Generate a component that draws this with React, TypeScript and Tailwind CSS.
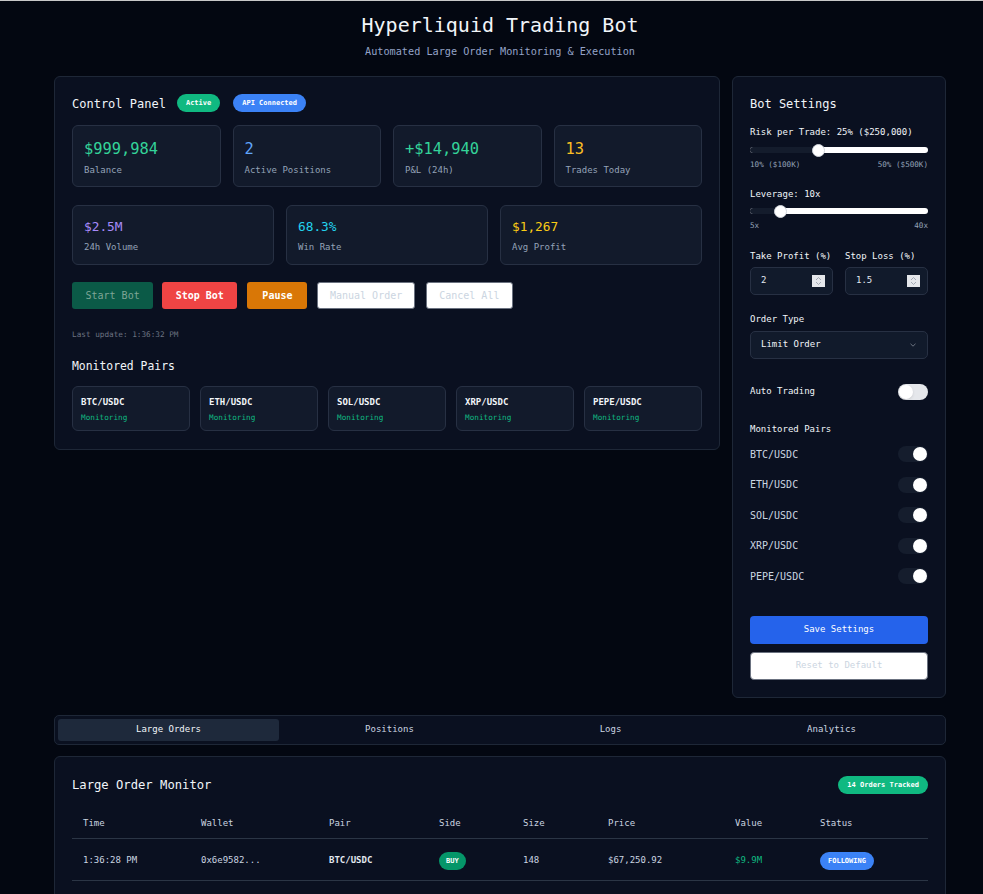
import React from "react";

const stats = [
  { value: "$999,984", label: "Balance", color: "text-[#34d399]" },
  { value: "2", label: "Active Positions", color: "text-[#60a5fa]" },
  { value: "+$14,940", label: "P&L (24h)", color: "text-[#34d399]" },
  { value: "13", label: "Trades Today", color: "text-[#fbbf24]" },
];

const stats2 = [
  { value: "$2.5M", label: "24h Volume", color: "text-[#a78bfa]" },
  { value: "68.3%", label: "Win Rate", color: "text-[#22d3ee]" },
  { value: "$1,267", label: "Avg Profit", color: "text-[#facc15]" },
];

const pairs = ["BTC/USDC", "ETH/USDC", "SOL/USDC", "XRP/USDC", "PEPE/USDC"];

const tabs = ["Large Orders", "Positions", "Logs", "Analytics"];

function Slider({ pct }: { pct: number }) {
  // thumb 13px, track travels width - 13
  const left = `calc(${pct} * (100% - 13px))`;
  return (
    <div className="relative h-[14px] flex items-center">
      <div className="w-full h-[6px] rounded-full bg-white overflow-hidden flex">
        <div className="h-full bg-[#141c2c]" style={{ width: `calc(${pct} * (100% - 13px) + 6px)` }} />
      </div>
      <div
        className="absolute top-[0.5px] w-[13px] h-[13px] rounded-full bg-white border border-[#d1d5db]"
        style={{ left }}
      />
    </div>
  );
}

function Toggle({ on }: { on: boolean }) {
  return on ? (
    <div className="w-[30px] h-[16px] rounded-full bg-[#151d2d] flex items-center justify-end pr-[1px]">
      <div className="w-[14px] h-[14px] rounded-full bg-white" />
    </div>
  ) : (
    <div className="w-[30px] h-[16px] rounded-full bg-[#e5e7eb] flex items-center pl-[1px]">
      <div className="w-[14px] h-[14px] rounded-full bg-white shadow-sm" />
    </div>
  );
}

function NumberInput({ value }: { value: string }) {
  return (
    <div className="h-[28px] rounded-[5px] border border-[#273043] bg-[#111a2b] flex items-center justify-between pl-[10px] pr-[7px]">
      <span className="text-[9px] text-[#e2e8f0]">{value}</span>
      <div className="w-[13px] h-[12px] bg-[#e5e7eb] flex flex-col items-center justify-center">
        <svg width="7" height="10" viewBox="0 0 7 10" fill="none" stroke="#9ca3af" strokeWidth="0.9">
          <path d="M1 4 L3.5 1.5 L6 4" />
          <path d="M1 6 L3.5 8.5 L6 6" />
        </svg>
      </div>
    </div>
  );
}

export default function App() {
  return (
    <div className="w-full min-h-[894px] overflow-hidden bg-[#030711] border-t border-[#c8c8c8] font-['DejaVu_Sans_Mono',monospace] text-[#e2e8f0]">
      <div className="w-[1000px] px-[54px] pt-[10px] pb-10">
        <header className="text-center">
          <h1 className="text-[20px] leading-[28px] text-[#f1f5f9]">Hyperliquid Trading Bot</h1>
          <p className="mt-[5px] text-[10.2px] leading-[15px] text-[#94a3c8]">
            Automated Large Order Monitoring &amp; Execution
          </p>
        </header>

        <div className="mt-[17px] flex gap-[12px] items-start">
          {/* control panel */}
          <section className="w-[666px] rounded-[6px] border border-[#1e2737] bg-[#0a1020] px-[17px] pt-[17px] pb-[18px]">
            <div className="h-[18px] flex items-center">
              <h2 className="text-[12px] leading-[18px] text-[#f1f5f9] translate-y-[0.5px]">Control Panel</h2>
              <span className="ml-[11px] h-[18px] px-[9px] rounded-full bg-[#10b981] text-white text-[7px] font-bold flex items-center">
                Active
              </span>
              <span className="ml-[13px] h-[18px] px-[9px] rounded-full bg-[#3b82f6] text-white text-[7px] font-bold flex items-center">
                API Connected
              </span>
            </div>

            <div className="mt-[13px] grid grid-cols-4 gap-[12px]">
              {stats.map((s) => (
                <div key={s.label} className="h-[62px] rounded-[6px] border border-[#273043] bg-[#121a2b] px-[11px] pt-[12px]">
                  <div className={`text-[15.4px] leading-[22px] ${s.color}`}>{s.value}</div>
                  <div className="mt-[4px] text-[9px] leading-[13px] text-[#94a3b8]">{s.label}</div>
                </div>
              ))}
            </div>

            <div className="mt-[18px] grid grid-cols-3 gap-[12px]">
              {stats2.map((s) => (
                <div key={s.label} className="h-[60px] rounded-[6px] border border-[#273043] bg-[#121a2b] px-[11px] pt-[11px]">
                  <div className={`text-[12.8px] leading-[19px] ${s.color}`}>{s.value}</div>
                  <div className="mt-[5px] text-[9px] leading-[13px] text-[#94a3b8]">{s.label}</div>
                </div>
              ))}
            </div>

            <div className="mt-[17px] flex text-[10px]">
              <button className="h-[27px] px-[13.5px] rounded-[3px] bg-[#0b5a47] text-[#7ea596]">Start Bot</button>
              <button className="ml-[9px] h-[27px] px-[13.5px] rounded-[3px] bg-[#ef4444] text-white font-bold">Stop Bot</button>
              <button className="ml-[10px] h-[27px] px-[15px] rounded-[3px] bg-[#d97706] text-white font-bold">Pause</button>
              <button className="ml-[10px] h-[27px] px-[11.5px] rounded-[3px] bg-white border border-[#6b7280] text-[#cbd5e1]">Manual Order</button>
              <button className="ml-[11px] h-[27px] px-[12.5px] rounded-[3px] bg-white border border-[#6b7280] text-[#cbd5e1]">Cancel All</button>
            </div>

            <p className="mt-[20px] text-[7.7px] leading-[12px] text-[#6b7280]">Last update: 1:36:32 PM</p>

            <h3 className="mt-[17px] text-[11.4px] leading-[16px] text-[#f1f5f9]">Monitored Pairs</h3>
            <div className="mt-[12px] grid grid-cols-5 gap-[10px]">
              {pairs.map((p) => (
                <div key={p} className="h-[45px] rounded-[6px] border border-[#273043] bg-[#121a2b] px-[8px] pt-[9px]">
                  <div className="text-[9px] leading-[13px] font-bold text-[#f1f5f9]">{p}</div>
                  <div className="mt-[3px] text-[7.7px] leading-[12px] text-[#10b981]">Monitoring</div>
                </div>
              ))}
            </div>
          </section>

          {/* settings */}
          <aside className="w-[214px] rounded-[6px] border border-[#1e2737] bg-[#0a1020] p-[17px]">
            <h2 className="text-[12px] leading-[18px] text-[#f1f5f9] translate-y-[0.5px]">Bot Settings</h2>

            <p className="mt-[14px] text-[9px] leading-[13px] text-[#f1f5f9]">Risk per Trade: 25% ($250,000)</p>
            <div className="mt-[4px]">
              <Slider pct={0.375} />
            </div>
            <div className="mt-[3px] flex justify-between text-[7.6px] leading-[10px] text-[#94a3b8]">
              <span>10% ($100K)</span>
              <span>50% ($500K)</span>
            </div>

            <p className="mt-[17.5px] text-[9px] leading-[13px] text-[#f1f5f9]">Leverage: 10x</p>
            <div className="mt-[3.5px]">
              <Slider pct={0.143} />
            </div>
            <div className="mt-[3px] flex justify-between text-[7.6px] leading-[10px] text-[#94a3b8]">
              <span>5x</span>
              <span>40x</span>
            </div>

            <div className="mt-[18.5px] grid grid-cols-2 gap-[12px]">
              <div>
                <p className="text-[9px] leading-[13px] text-[#f1f5f9]">Take Profit (%)</p>
                <div className="mt-[4.5px]">
                  <NumberInput value="2" />
                </div>
              </div>
              <div>
                <p className="text-[9px] leading-[13px] text-[#f1f5f9]">Stop Loss (%)</p>
                <div className="mt-[4.5px]">
                  <NumberInput value="1.5" />
                </div>
              </div>
            </div>

            <p className="mt-[18px] text-[9px] leading-[13px] text-[#f1f5f9]">Order Type</p>
            <div className="mt-[5px] h-[28px] rounded-[5px] border border-[#273043] bg-[#111a2b] flex items-center justify-between pl-[10px] pr-[10px]">
              <span className="text-[9px] text-[#f1f5f9]">Limit Order</span>
              <svg width="8" height="6" viewBox="0 0 8 6" fill="none" stroke="#6b7280" strokeWidth="1">
                <path d="M1.5 1.8 L4 4.2 L6.5 1.8" />
              </svg>
            </div>

            <div className="mt-[25px] h-[16px] flex items-center justify-between">
              <span className="text-[9px] text-[#f1f5f9]">Auto Trading</span>
              <Toggle on={false} />
            </div>

            <p className="mt-[22.5px] text-[9px] leading-[13px] text-[#f1f5f9]">Monitored Pairs</p>
            <div className="mt-[10.5px] flex flex-col gap-[14.5px]">
              {pairs.map((p) => (
                <div key={p} className="h-[16px] flex items-center justify-between">
                  <span className="text-[10px] text-[#cbd5e1]">{p}</span>
                  <Toggle on />
                </div>
              ))}
            </div>

            <button className="mt-[32px] w-full h-[28px] rounded-[4px] bg-[#2563eb] text-white text-[9px]">
              Save Settings
            </button>
            <button className="mt-[8px] w-full h-[28px] rounded-[4px] bg-white border border-[#6b7280] text-[#cbd5e1] text-[9px]">
              Reset to Default
            </button>
          </aside>
        </div>

        {/* tabs */}
        <nav className="mt-[17px] h-[30px] rounded-[5px] border border-[#1e2737] bg-[#0a1020] p-[3px] grid grid-cols-4">
          {tabs.map((t, i) => (
            <div
              key={t}
              className={
                i === 0
                  ? "h-[22px] rounded-[3px] bg-[#1e293b] text-[#f1f5f9] text-[9px] flex items-center justify-center"
                  : "h-[22px] text-[#cbd5e1] text-[9px] flex items-center justify-center"
              }
            >
              {t}
            </div>
          ))}
        </nav>

        {/* large order monitor */}
        <section className="mt-[11px] rounded-[6px] border border-[#1e2737] bg-[#0a1020] px-[17px] pt-[18px] pb-[30px]">
          <div className="h-[20px] flex items-center justify-between">
            <h2 className="text-[12.2px] text-[#f1f5f9]">Large Order Monitor</h2>
            <span className="h-[18px] px-[9px] rounded-full bg-[#10b981] text-white text-[7px] font-bold flex items-center">
              14 Orders Tracked
            </span>
          </div>

          <table className="mt-[11px] w-full text-[9px] text-left border-collapse">
            <thead>
              <tr className="h-[32px] border-b border-[#2b3545] text-[#cbd5e1]">
                <th className="w-[118px] pl-[11px] pt-[4px] font-normal">Time</th>
                <th className="w-[128px] pl-[11px] pt-[4px] font-normal">Wallet</th>
                <th className="w-[110px] pl-[11px] pt-[4px] font-normal">Pair</th>
                <th className="w-[84px] pl-[11px] pt-[4px] font-normal">Side</th>
                <th className="w-[85px] pl-[11px] pt-[4px] font-normal">Size</th>
                <th className="w-[127px] pl-[11px] pt-[4px] font-normal">Price</th>
                <th className="w-[85px] pl-[11px] pt-[4px] font-normal">Value</th>
                <th className="pl-[11px] pt-[4px] font-normal">Status</th>
              </tr>
            </thead>
            <tbody>
              <tr className="h-[42px] border-b border-[#2b3545] text-[#cbd5e1]">
                <td className="pl-[11px] pt-[4px]">1:36:28 PM</td>
                <td className="pl-[11px] pt-[4px]">0x6e9582...</td>
                <td className="pl-[11px] pt-[4px] font-bold text-[#e2e8f0]">BTC/USDC</td>
                <td className="pl-[11px] pt-[4px]">
                  <span className="inline-flex h-[18px] px-[7px] items-center rounded-full bg-[#059669] text-white text-[7px] font-bold">BUY</span>
                </td>
                <td className="pl-[11px] pt-[4px]">148</td>
                <td className="pl-[11px] pt-[4px]">$67,250.92</td>
                <td className="pl-[11px] pt-[4px] text-[#10b981]">$9.9M</td>
                <td className="pl-[11px] pt-[4px]">
                  <span className="inline-flex h-[18px] px-[8px] items-center rounded-full bg-[#3b82f6] text-white text-[7px] font-bold">FOLLOWING</span>
                </td>
              </tr>
            </tbody>
          </table>
        </section>
      </div>
    </div>
  );
}
